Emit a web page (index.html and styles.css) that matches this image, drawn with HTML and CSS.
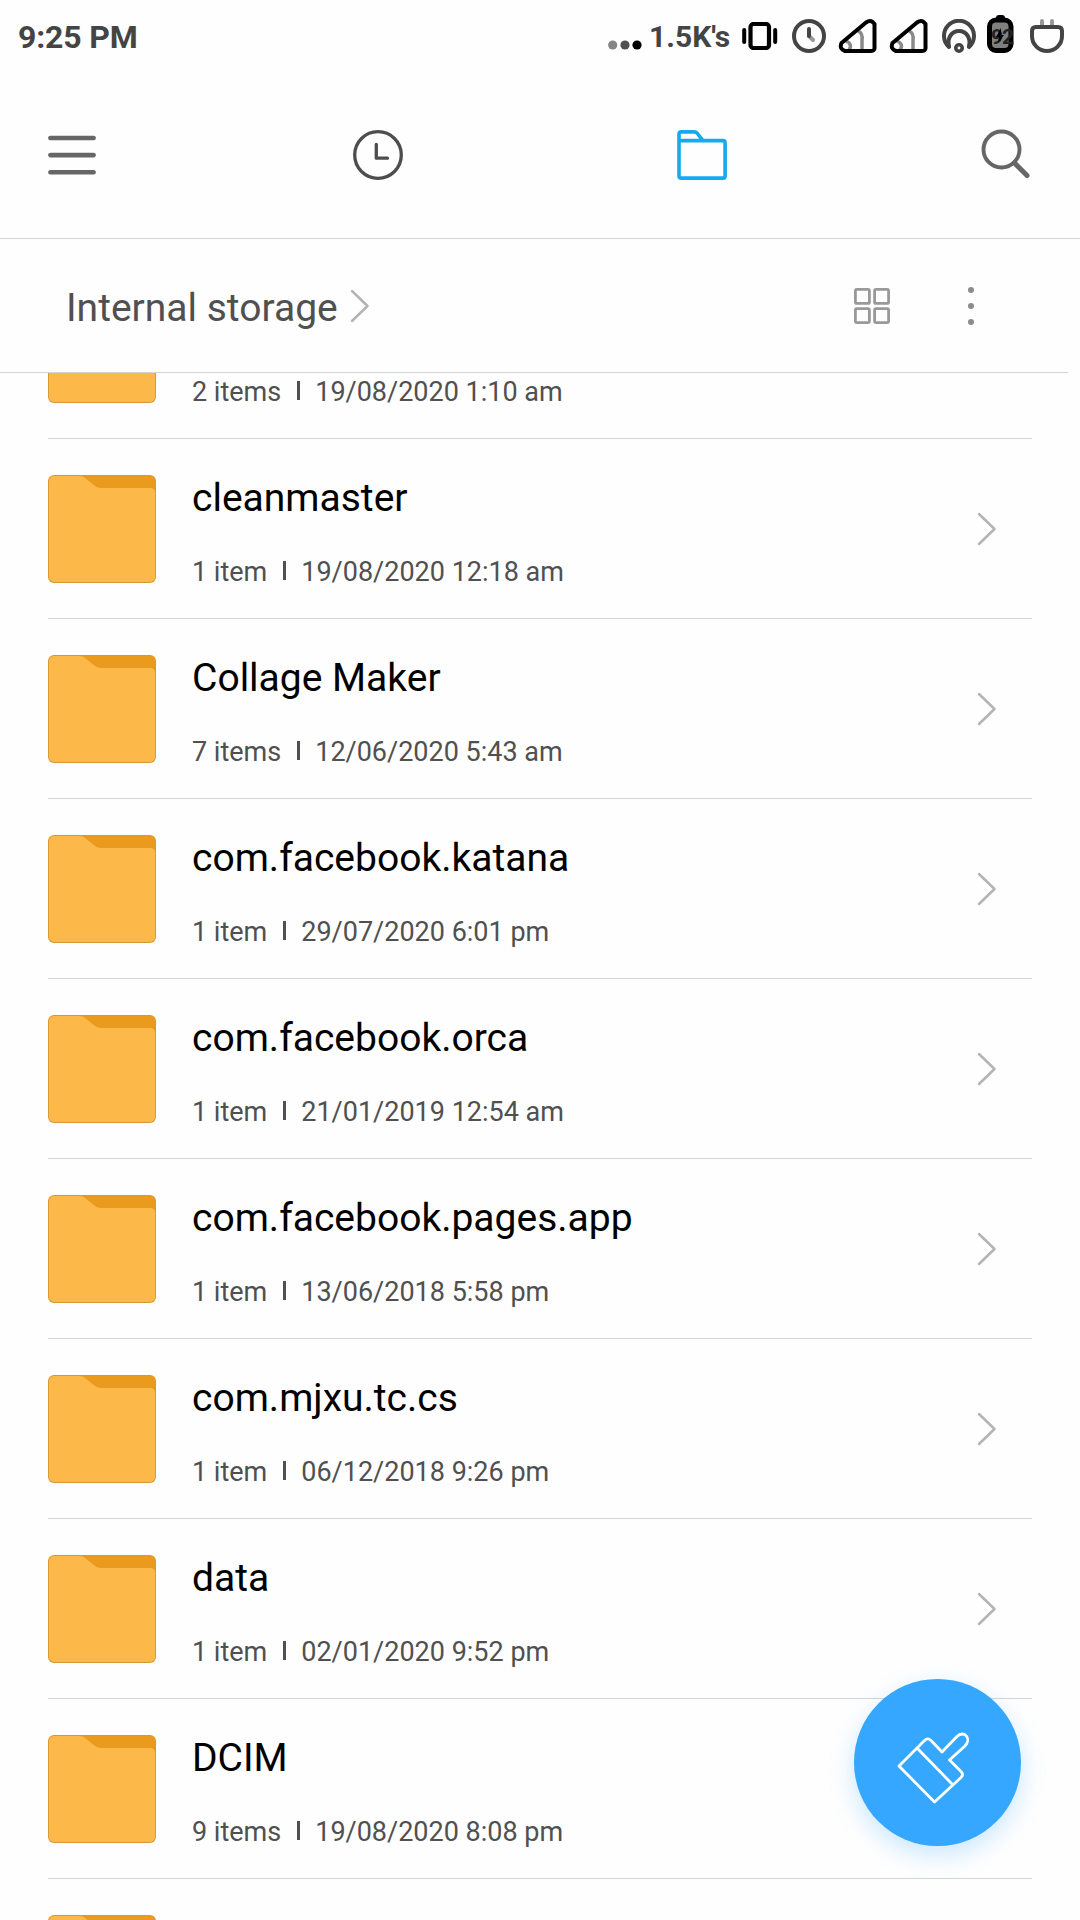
FILE: index.html
```html
<!DOCTYPE html>
<html lang="en">
<head>
<meta charset="utf-8">
<title>File Manager</title>
<link rel="stylesheet" href="styles.css">
</head>
<body>
<svg class="defs" width="0" height="0" aria-hidden="true">
  <symbol id="folder" viewBox="0 0 108 108">
    <rect x="0" y="0" width="108" height="108" rx="6" fill="#d79a33"/>
    <path d="M30 1H102a5 5 0 0 1 5 5V26H30Z" fill="#ea9a1c"/>
    <path d="M6 1H32Q35 1 37 3L47 11Q50 13 53 13H102Q107 13 107 18V102a5 5 0 0 1-5 5H6a5 5 0 0 1-5-5V6a5 5 0 0 1 5-5Z" fill="#fcb949"/>
  </symbol>
  <symbol id="chevron" viewBox="0 0 20 34">
    <path d="M2 2L17.500 17L2 32" fill="none" stroke="#b4b4b4" stroke-width="2.500" stroke-linecap="round" stroke-linejoin="round"/>
  </symbol>
  <symbol id="signal" viewBox="0 0 40 36">
    <path d="M8 23Q15 26 11 32M20 13Q25 15 24 22V33" fill="none" stroke="#8a8a8a" stroke-width="3.500"/>
    <path d="M3.500 25L28 4.500Q33 1 36.500 6V29Q37 33 33 33H7Q1 31 3.500 25Z" fill="none" stroke="#000" stroke-width="4" stroke-linejoin="round"/>
  </symbol>
</svg>

<header class="status">
  <span class="time">9:25 PM</span>
  <div class="tray">
    <svg class="dots" viewBox="0 0 34 10" width="34" height="10"><circle cx="4.700" cy="5" r="4.600" fill="#858585"/><circle cx="17" cy="5" r="4.600" fill="#505050"/><circle cx="29" cy="5" r="4.600"/></svg>
    <span class="speed">1.5K's</span>
    <svg class="vibrate" viewBox="0 0 36 28" width="36" height="28"><rect x="8.500" y="2" width="18.500" height="24" rx="3" fill="none" stroke="#000" stroke-width="4.200"/><path d="M2.200 8V20M33.200 8V20" stroke="#000" stroke-width="4" stroke-linecap="round"/></svg>
    <svg class="alarm" viewBox="0 0 34 34" width="34" height="34"><circle cx="17" cy="17" r="15" fill="none" stroke="#444" stroke-width="4"/><path d="M17 17L21 21" stroke="#999" stroke-width="4" stroke-linecap="round"/><path d="M17 10V17" stroke="#444" stroke-width="4" stroke-linecap="round"/></svg>
    <svg class="sig-one" width="40" height="36"><use href="#signal"/></svg>
    <svg class="sig-two" width="40" height="36"><use href="#signal"/></svg>
    <svg class="wifi" viewBox="0 0 34 34" width="34" height="34"><g fill="none" stroke="#444" stroke-width="4" stroke-linecap="round"><path d="M7 28A15 15 0 1 1 27 28"/><path d="M7 27C5 20 9 12 17 12S29 20 27 27"/><circle cx="17" cy="29" r="3.200" stroke-width="3.600"/></g></svg>
    <div class="battery">
      <svg viewBox="0 0 28 38" width="28" height="38"><rect x="9" y="0" width="9" height="6" rx="3"/><rect x="2.500" y="5" width="21.500" height="30.500" rx="6.500" fill="#808080" stroke="#000" stroke-width="5"/></svg>
      <span class="charge">92</span>
      <svg class="bolt" viewBox="0 0 28 38" width="28" height="38"><path d="M14 13L9 22H12L11 28L17 20H14Z"/></svg>
    </div>
    <svg class="plug" viewBox="0 0 34 34" width="34" height="34"><path d="M12 2V7M22 2V7" stroke="#999" stroke-width="4" stroke-linecap="round"/><path d="M6 8H28Q32 8 32 12V17A15 15 0 0 1 2 17V12Q2 8 6 8Z" fill="none" stroke="#444" stroke-width="4"/></svg>
  </div>
</header>

<nav class="toolbar">
  <svg class="menu" viewBox="0 0 48 40" width="48" height="40"><path d="M2.400 3H45.600M2.400 20.100H45.600M2.400 37.200H45.600" stroke="#666" stroke-width="4.600" stroke-linecap="round"/></svg>
  <svg class="recent" viewBox="0 0 50 50" width="50" height="50"><g fill="none" stroke="#4d4d4d" stroke-width="3.300"><circle cx="25" cy="25" r="23.300"/><path d="M23.300 14.500V28.200H34.500" stroke-linecap="round" stroke-linejoin="round"/></g></svg>
  <svg class="files" viewBox="0 0 50 50" width="50" height="50"><path d="M2 11V4Q2 1.900 4.300 1.900H17Q19 1.900 20 3L26 10.600H46Q48.100 10.600 48.100 13V46Q48.100 48.100 46 48.100H4.300Q2 48.100 2 46V10.600H27" fill="none" stroke="#14a9f0" stroke-width="3.600" stroke-linejoin="round"/></svg>
  <svg class="search" viewBox="0 0 50 50" width="50" height="50"><circle cx="20.500" cy="20.500" r="18" fill="none" stroke="#666" stroke-width="3.900"/><path d="M33.500 34L46 46.500" stroke="#666" stroke-width="5" stroke-linecap="round"/></svg>
</nav>

<section class="pathbar">
  <span class="crumb">Internal storage</span>
  <svg class="crumb-arrow" width="20" height="34"><use href="#chevron"/></svg>
  <svg class="grid" viewBox="0 0 36 36" width="36" height="36"><g fill="none" stroke="#999" stroke-width="2.800"><rect x="1.400" y="1.400" width="14" height="14" rx="1.500"/><rect x="20.600" y="1.400" width="14" height="14" rx="1.500"/><rect x="1.400" y="20.600" width="14" height="14" rx="1.500"/><rect x="20.600" y="20.600" width="14" height="14" rx="1.500"/></g></svg>
  <svg class="more" viewBox="0 0 6 38" width="6" height="38"><g fill="#8c8c8c"><circle cx="3" cy="3" r="3"/><circle cx="3" cy="19" r="3"/><circle cx="3" cy="35" r="3"/></g></svg>
</section>

<main class="viewport">
  <ul class="list">
    <li class="row"><svg class="folder"><use href="#folder"/></svg><div class="info"><span class="name"></span><span class="meta">2 items<i class="bar"></i>19/08/2020 1:10 am</span></div></li>
    <li class="row"><svg class="folder"><use href="#folder"/></svg><div class="info"><span class="name">cleanmaster</span><span class="meta">1 item<i class="bar"></i>19/08/2020 12:18 am</span></div><svg class="go"><use href="#chevron"/></svg></li>
    <li class="row"><svg class="folder"><use href="#folder"/></svg><div class="info"><span class="name">Collage Maker</span><span class="meta">7 items<i class="bar"></i>12/06/2020 5:43 am</span></div><svg class="go"><use href="#chevron"/></svg></li>
    <li class="row"><svg class="folder"><use href="#folder"/></svg><div class="info"><span class="name">com.facebook.katana</span><span class="meta">1 item<i class="bar"></i>29/07/2020 6:01 pm</span></div><svg class="go"><use href="#chevron"/></svg></li>
    <li class="row"><svg class="folder"><use href="#folder"/></svg><div class="info"><span class="name">com.facebook.orca</span><span class="meta">1 item<i class="bar"></i>21/01/2019 12:54 am</span></div><svg class="go"><use href="#chevron"/></svg></li>
    <li class="row"><svg class="folder"><use href="#folder"/></svg><div class="info"><span class="name">com.facebook.pages.app</span><span class="meta">1 item<i class="bar"></i>13/06/2018 5:58 pm</span></div><svg class="go"><use href="#chevron"/></svg></li>
    <li class="row"><svg class="folder"><use href="#folder"/></svg><div class="info"><span class="name">com.mjxu.tc.cs</span><span class="meta">1 item<i class="bar"></i>06/12/2018 9:26 pm</span></div><svg class="go"><use href="#chevron"/></svg></li>
    <li class="row"><svg class="folder"><use href="#folder"/></svg><div class="info"><span class="name">data</span><span class="meta">1 item<i class="bar"></i>02/01/2020 9:52 pm</span></div><svg class="go"><use href="#chevron"/></svg></li>
    <li class="row"><svg class="folder"><use href="#folder"/></svg><div class="info"><span class="name">DCIM</span><span class="meta">9 items<i class="bar"></i>19/08/2020 8:08 pm</span></div></li>
    <li class="row"><svg class="folder"><use href="#folder"/></svg></li>
  </ul>
</main>

<button class="clean" aria-label="Clean up">
  <svg viewBox="0 0 166 166" width="166" height="166"><g fill="none" stroke="#fff" stroke-width="2.800" stroke-linejoin="round" stroke-linecap="round"><path d="M45 86L70 61Q73.500 57 77 60.500L88 72L103 56.500C110 49.500 118 58.500 111 66L95.500 80L107 91.500Q110 94.500 107 97.500L80.500 122Z"/><path d="M63.500 68.500L98 104"/></g></svg>
</button>
</body>
</html>
```
FILE: styles.css
```css
* { box-sizing: border-box; }
body {
  margin: 0;
  width: 1080px;
  height: 1920px;
  overflow: hidden;
  display: flex;
  flex-direction: column;
  background: #fefefe;
  font-family: Roboto, sans-serif;
  color: #000;
}
svg { display: block; flex: none; }
.defs { position: absolute; }

.status {
  flex: none;
  height: 72px;
  display: flex;
  justify-content: space-between;
  align-items: center;
  padding: 0 16px 0 18px;
  font-size: 32px;
  font-weight: 700;
  line-height: 38px;
  color: #444;
}
.time { margin-top: 2px; letter-spacing: -0.15px; }
.tray { display: flex; align-items: center; }
.dots { margin: 18px 7px 0 0; }
.speed { width: 81px; margin-right: 12px; padding-top: 2px; white-space: nowrap; font-size: 30px; }
.vibrate { margin-right: 14px; }
.alarm { margin-right: 12px; }
.sig-one { margin-right: 11px; }
.sig-two { margin-right: 13px; }
.wifi { margin-right: 11px; }
.battery { display: grid; width: 28px; height: 38px; margin: -4px 15px 0 0; }
.battery > * { grid-area: 1 / 1; }
.charge { padding: 3px 0 0 4px; font-size: 21px; letter-spacing: -1px; color: #222; }

.toolbar {
  flex: none;
  height: 167px;
  display: flex;
  align-items: center;
  padding: 0 48px;
  border-bottom: 1px solid #d4d4d4;
}
.toolbar svg { margin-bottom: 1px; }
.toolbar .menu { margin-bottom: 0; }
.recent { margin-left: 257px; }
.files { margin-left: 274px; }
.toolbar .search { margin: 0 1px 3px auto; }

.pathbar {
  flex: none;
  width: 1068px;
  height: 134px;
  display: flex;
  align-items: center;
  padding: 0 94px 0 66px;
  border-bottom: 1px solid #d4d4d4;
}
.crumb { width: 284px; white-space: nowrap; font-size: 39px; color: #505050; padding-top: 4px; }
.grid { margin-left: auto; }
.more { margin-left: 78px; }

.viewport { flex: 1; overflow: hidden; }
.list { list-style: none; margin: -114px 37px 0 48px; padding: 0; }
.row {
  width: 984px;
  height: 180px;
  display: flex;
  align-items: flex-start;
  padding-top: 36px;
  border-bottom: 1px solid #d4d4d4;
}
.folder { width: 108px; height: 108px; }
.info { flex: 1; display: flex; flex-direction: column; margin-left: 36px; }
.name { font-size: 39px; line-height: 47px; height: 79px; }
.meta { display: flex; align-items: center; font-size: 27px; line-height: 36px; color: #505050; white-space: nowrap; }
.bar { width: 3px; height: 19px; margin: 0 15px 3px 16px; background: #505050; }
.go { width: 20px; height: 34px; margin: 37px 35px 0 0; }

.clean {
  position: absolute;
  left: 854px;
  top: 1679px;
  width: 167px;
  height: 167px;
  padding: 0;
  border: 0;
  border-radius: 50%;
  background: #35a7ff;
  box-shadow: 0 9px 24px rgba(53, 167, 255, .26);
}
```
